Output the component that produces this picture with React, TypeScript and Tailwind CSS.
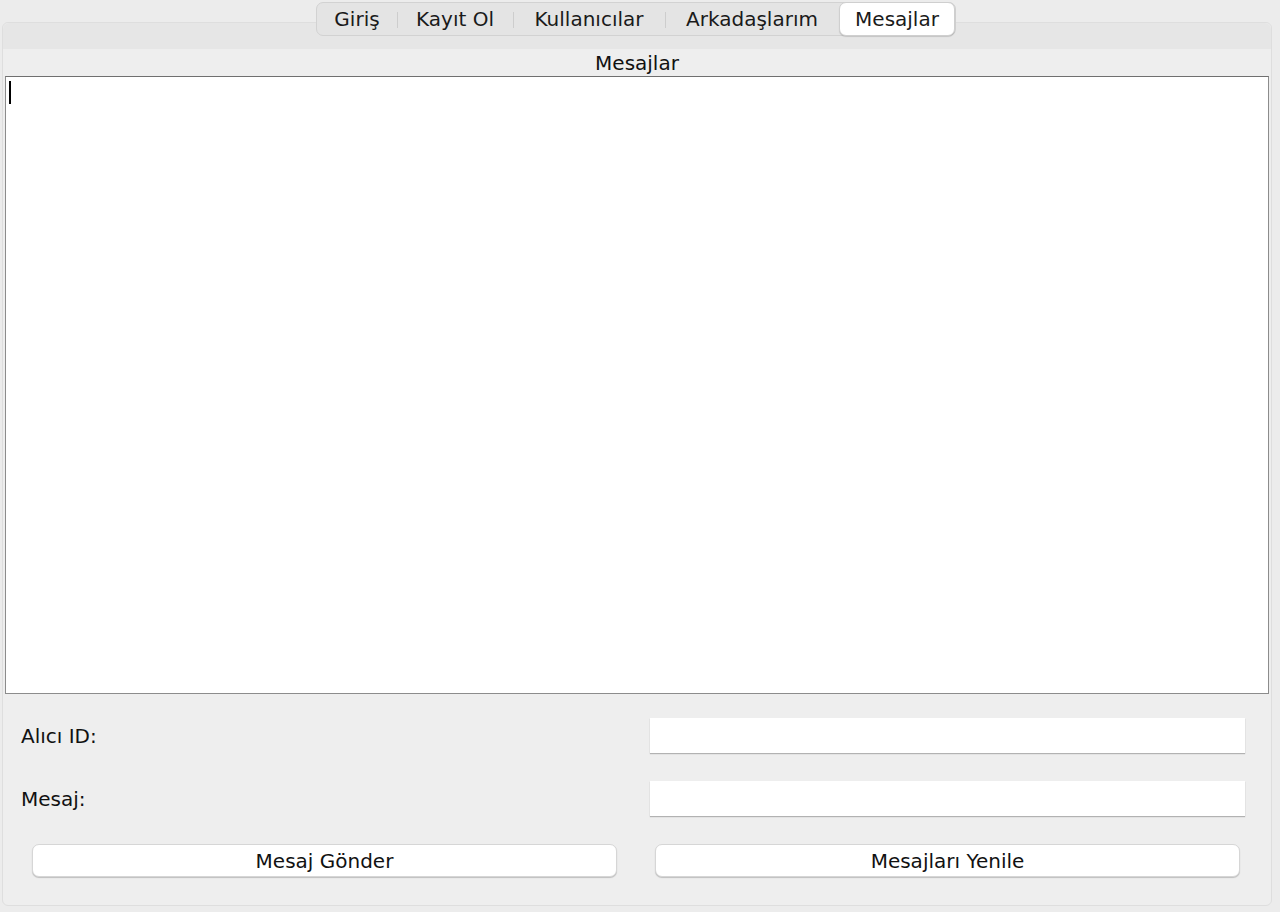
import React, { useState } from 'react';

const tabs = [
    { name: 'Giriş', w: 'w-[80px]' },
    { name: 'Kayıt Ol', w: 'w-[116px]' },
    { name: 'Kullanıcılar', w: 'w-[152px]' },
    { name: 'Arkadaşlarım', w: 'w-[174px]' },
    { name: 'Mesajlar', w: 'w-[116px]' },
];

const TabBar: React.FC<{ active: string; onSelect: (t: string) => void }> = ({ active, onSelect }) => (
    <div className="relative z-10 flex justify-center pt-[2px] pr-[8px]">
        <div className="flex h-[34px] items-stretch rounded-[7px] border border-[#d2d2d2] bg-[#e4e4e4]">
            {tabs.map((t, i) => {
                const selected = t.name === active;
                const prevSelected = i > 0 && tabs[i - 1].name === active;
                return (
                    <button
                        key={t.name}
                        onClick={() => onSelect(t.name)}
                        className={`relative flex items-center justify-center ${t.w} text-[20px] leading-none text-[#1a1a1a] ${selected ? '-my-px rounded-[7px] border border-[#cfcfcf] bg-white shadow-[0_1px_1px_rgba(0,0,0,0.15)]' : ''}`}
                    >
                        {i > 0 && !selected && !prevSelected && (
                            <span className="absolute left-0 top-[9px] h-[16px] w-px bg-[#cdcdcd]" />
                        )}
                        {t.name}
                    </button>
                );
            })}
        </div>
    </div>
);

const Field: React.FC<{ label: string }> = ({ label }) => (
    <div className="flex h-[35px] items-center">
        <label className="w-[647px] pl-[18px] text-[20px] text-[#111]">{label}</label>
        <input className="h-[35px] w-[595px] bg-white shadow-[0_1px_1px_rgba(0,0,0,0.25)] outline-none" />
    </div>
);

const MacButton: React.FC<{ children: React.ReactNode }> = ({ children }) => (
    <button className="h-[33px] w-[585px] rounded-[7px] border border-[#d6d6d6] bg-white text-[20px] text-[#111] shadow-[0_1px_1px_rgba(0,0,0,0.2)]">
        {children}
    </button>
);

export default function App() {
    const [active, setActive] = useState('Mesajlar');

    return (
        <div className="h-[912px] w-[1280px] overflow-hidden bg-[#ececec]" style={{ fontFamily: '"DejaVu Sans", "Liberation Sans", sans-serif' }}>
            <TabBar active={active} onSelect={setActive} />
            <div className="ml-[2px] mt-[-14px] h-[884px] w-[1270px] rounded-[6px] border border-[#dedede] bg-[#eeeeee]">
                <div className="h-[26px] rounded-t-[6px] bg-[#e6e6e6]" />
                <div className="flex h-[27px] items-center justify-center text-[20px] text-[#111]">Mesajlar</div>
                <div className="mx-[2px] h-[618px] border border-[#8c8c8c] border-t-[#6f6f6f] bg-white pl-[3px] pt-[4px]">
                    <span className="block h-[23px] w-[2px] bg-black" />
                </div>
                <div className="mt-[24px] flex flex-col gap-[28px]">
                    <Field label="Alıcı ID:" />
                    <Field label="Mesaj:" />
                </div>
                <div className="mt-[28px] flex gap-[38px] pl-[29px]">
                    <MacButton>Mesaj Gönder</MacButton>
                    <MacButton>Mesajları Yenile</MacButton>
                </div>
            </div>
        </div>
    );
}
